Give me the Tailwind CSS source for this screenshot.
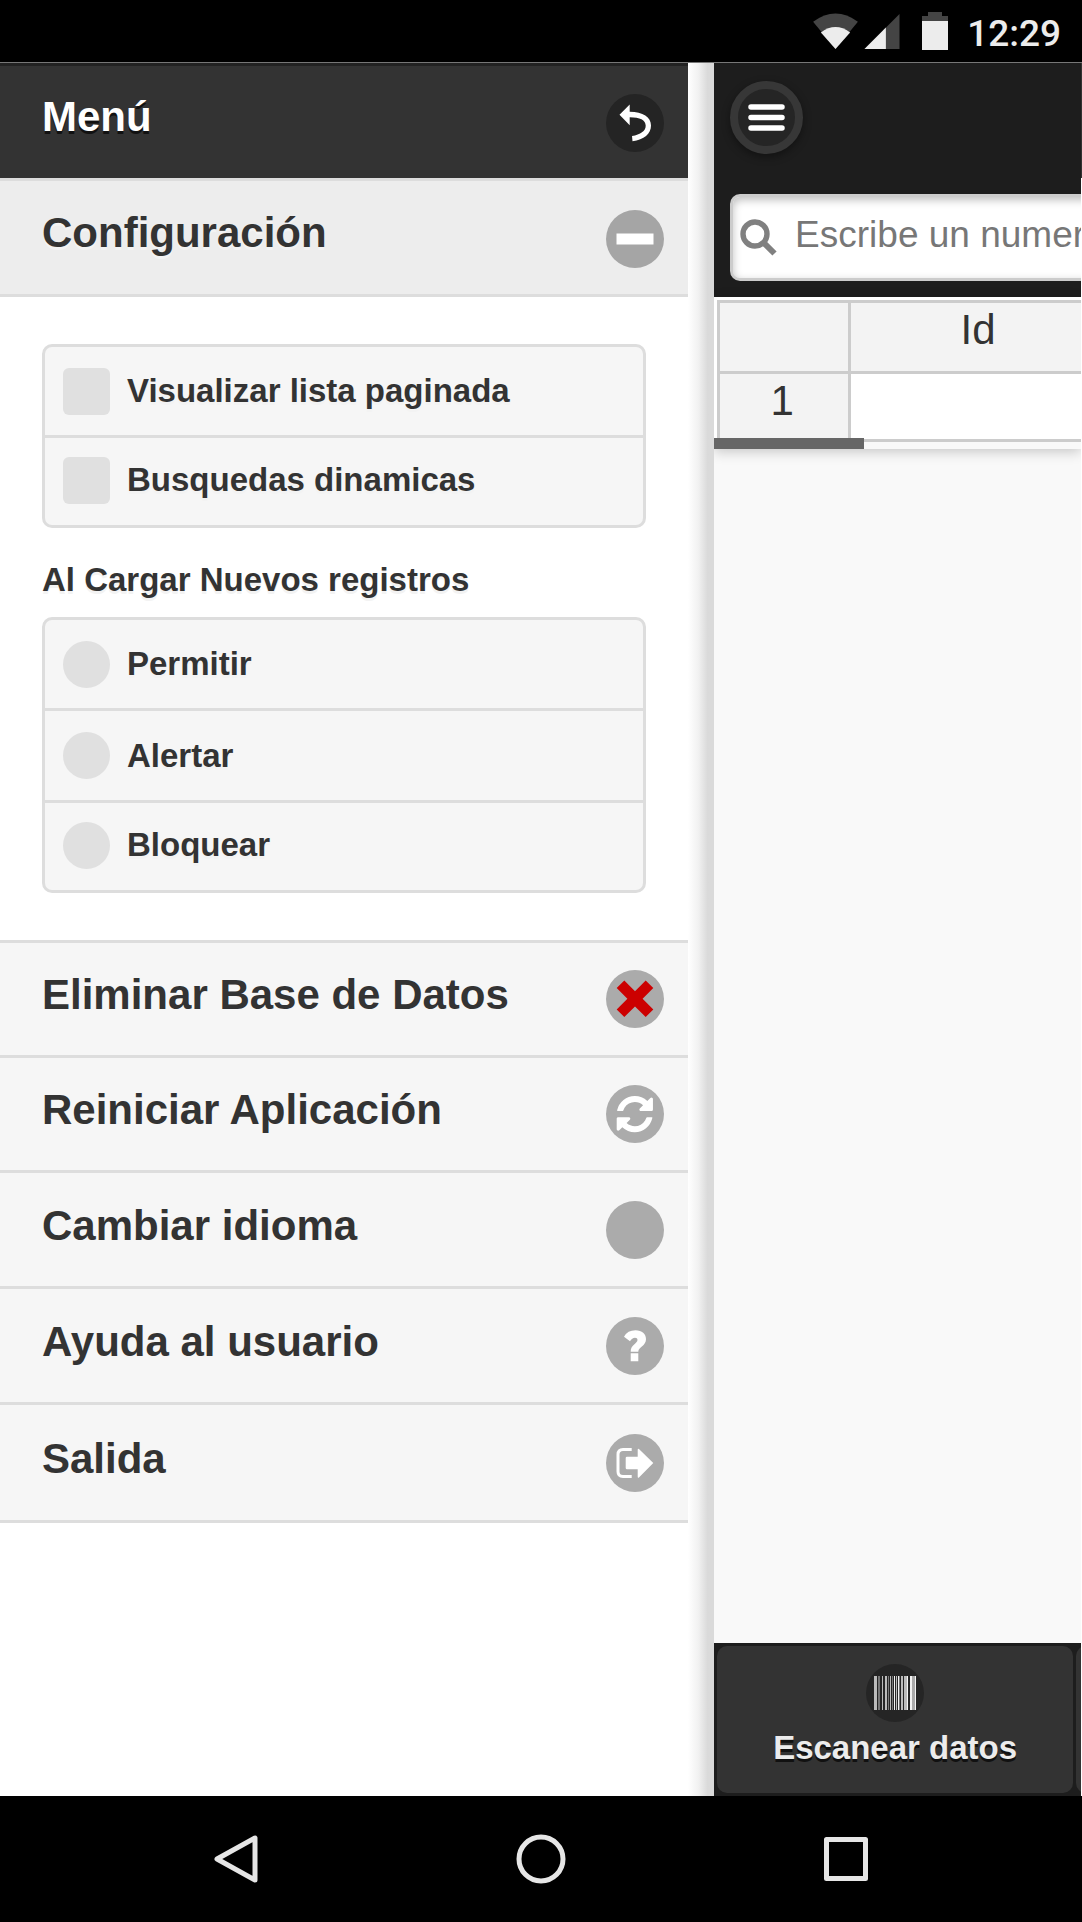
<!DOCTYPE html>
<html lang="es">
<head>
  <meta charset="UTF-8" />
  <meta name="viewport" content="width=device-width, initial-scale=1.0"/>
  <title>Menú</title>
  <script src="https://cdn.jsdelivr.net/npm/@tailwindcss/browser@4"></script>
</head>
<body class="flex min-h-screen flex-col overflow-x-hidden bg-white font-['Liberation_Sans',Arial,sans-serif] text-[#333]">

  <!-- Status bar -->
  <header class="flex h-[63px] items-center justify-end border-b border-[#777] bg-black pr-[21px]">
    <svg class="mr-[6px] h-[37px] w-[45px]" viewBox="0 0 46 38">
      <path d="M0 9Q23-8 46 9L23 37z" fill="#444"/>
      <path d="M8 20Q23 9 38 20L23 37z" fill="#ececec"/>
    </svg>
    <svg class="mr-[22px] h-[37px] w-[36px]" viewBox="0 0 36 38">
      <path d="M36 1v36H0z" fill="#444"/>
      <path d="M22 15v22H0z" fill="#ececec"/>
    </svg>
    <svg class="mr-[19px] h-[38px] w-[26px]" viewBox="0 0 26 38">
      <path d="M6 0h14v4h6v6H0V4h6z" fill="#444"/>
      <path d="M0 9h26v29H0z" fill="#ececec"/>
    </svg>
    <span class="pt-1 font-['Roboto',sans-serif] text-[37px] leading-none font-medium text-[#ececec]">12:29</span>
  </header>

  <div class="flex flex-1">

    <!-- Side panel -->
    <aside class="flex w-[66%] shrink-0">
      <nav class="flex-1 text-[42px] leading-[48px] font-bold">
        <div class="flex h-[115px] items-center justify-between border-t-3 border-[#222] bg-[#333] pt-[2px] pr-6 pl-[42px] text-white">
          <h1 class="pb-3 [text-shadow:0_3px_0_#111]">Menú</h1>
          <button type="button" aria-label="Volver">
            <svg class="size-[58px]" viewBox="0 0 58 58">
              <circle cx="29" cy="29" r="29" fill="#242424"/>
              <path d="M13.5 20.7L23.7 10.5V17.7C37 17.7 45 23 45 31.5C45 40 38 45.500 26.500 47.300L26 42C34.500 40.500 39.700 37 39.700 31.700C39.700 26 34 23.300 23.700 23.300V31.300z" fill="#fff"/>
            </svg>
          </button>
        </div>

        <button type="button" class="flex h-[119px] w-full items-center justify-between border-y-3 border-[#ddd] bg-[#ededed] pt-[2px] pr-6 pl-[42px] [text-shadow:0_3px_0_#f3f3f3]">
          <span class="pb-3">Configuración</span>
          <svg class="size-[58px]" viewBox="0 0 58 58">
            <circle cx="29" cy="29" r="29" fill="#a5a5a5"/>
            <path d="M10.500 23.500h37v11h-37z" fill="#fff"/>
          </svg>
        </button>

        <div class="px-[42px] py-[47px] text-[33px] leading-[40px] [text-shadow:0_3px_0_#f3f3f3]">
          <div class="divide-y-3 divide-[#ddd] overflow-hidden rounded-[10px] border-3 border-[#ddd] bg-[#f6f6f6]">
            <label class="flex h-[91px] items-center gap-[17px] pl-[18px]">
              <input type="checkbox" class="size-[47px] appearance-none rounded-md bg-[#e0e0e0]"> Visualizar lista paginada
            </label>
            <label class="flex h-[87px] items-center gap-[17px] pb-[3px] pl-[18px]">
              <input type="checkbox" class="size-[47px] appearance-none rounded-md bg-[#e0e0e0]"> Busquedas dinamicas
            </label>
          </div>

          <fieldset>
            <legend class="pt-8 pb-[17px]">Al Cargar Nuevos registros</legend>
            <div class="divide-y-3 divide-[#ddd] overflow-hidden rounded-[10px] border-3 border-[#ddd] bg-[#f6f6f6]">
              <label class="flex h-[91px] items-center gap-[17px] pl-[18px]">
                <input type="radio" name="registros" class="size-[47px] appearance-none rounded-full bg-[#e0e0e0]"> Permitir
              </label>
              <label class="flex h-[92px] items-center gap-[17px] pl-[18px]">
                <input type="radio" name="registros" class="size-[47px] appearance-none rounded-full bg-[#e0e0e0]"> Alertar
              </label>
              <label class="flex h-[87px] items-center gap-[17px] pb-[3px] pl-[18px]">
                <input type="radio" name="registros" class="size-[47px] appearance-none rounded-full bg-[#e0e0e0]"> Bloquear
              </label>
            </div>
          </fieldset>
        </div>

        <ul class="divide-y-3 divide-[#ddd] border-y-3 border-[#ddd] bg-[#f6f6f6] [text-shadow:0_3px_0_#f3f3f3]">
          <li>
            <button type="button" class="flex h-[112px] w-full items-center justify-between pr-6 pl-[42px]">
              <span class="pb-2">Eliminar Base de Datos</span>
              <svg class="size-[58px]" viewBox="0 0 58 58">
                <circle cx="29" cy="29" r="29" fill="#ababab"/>
                <path d="M18.300 10.500L29 21.200 39.700 10.500 47.300 18.100 36.600 28.800 47.300 39.500 39.700 47.100 29 36.400 18.300 47.100 10.700 39.500 21.400 28.800 10.700 18.100z" fill="#c00"/>
              </svg>
            </button>
          </li>
          <li>
            <button type="button" class="flex h-[112px] w-full items-center justify-between pr-6 pl-[42px]">
              <span class="pb-2">Reiniciar Aplicación</span>
              <svg class="size-[58px]" viewBox="0 0 58 58">
                <circle cx="29" cy="29" r="29" fill="#ababab"/>
                <path transform="translate(10.700 11) scale(.0236)" d="M1511 928q0 5-1 7-64 268-268 434.500T764 1536q-146 0-282.500-55T238 1324l-129 129q-19 19-45 19t-45-19-19-45V960q0-26 19-45t45-19h448q26 0 45 19t19 45-19 45l-137 137q71 66 161 102t187 36q134 0 250-65t186-179q11-17 53-117 8-23 30-23h192q13 0 22.500 9.500t9.500 22.500zm25-800v448q0 26-19 45t-45 19h-448q-26 0-45-19t-19-45 19-45l138-138Q969 256 768 256q-134 0-250 65T332 500q-11 17-53 117-8 23-30 23H50q-13 0-22.500-9.500T18 608v-7q65-268 270-434.500T768 0q146 0 284 55.500T1297 212l130-129q19-19 45-19t45 19 19 45z" fill="#fff"/>
              </svg>
            </button>
          </li>
          <li>
            <button type="button" class="flex h-[113px] w-full items-center justify-between pr-6 pl-[42px]">
              <span class="pb-2">Cambiar idioma</span>
              <svg class="size-[58px]" viewBox="0 0 58 58">
                <circle cx="29" cy="29" r="29" fill="#ababab"/>
              </svg>
            </button>
          </li>
          <li>
            <button type="button" class="flex h-[113px] w-full items-center justify-between pr-6 pl-[42px]">
              <span class="pb-2">Ayuda al usuario</span>
              <svg class="size-[58px]" viewBox="0 0 58 58">
                <circle cx="29" cy="29" r="29" fill="#ababab"/>
                <path d="M18 19.700Q21.500 13.300 29.500 13.300C36 13.300 40 17 40 22.300C40 29 32.300 30 32.300 34.700H24.700C24.300 28 31.500 26.500 31.500 23C31.500 21.500 30.500 20.700 29 20.700Q26 20.700 24 24.300zM24.700 36.300h7.600v8h-7.600z" fill="#fff"/>
              </svg>
            </button>
          </li>
          <li>
            <button type="button" class="flex h-[115px] w-full items-center justify-between pr-6 pl-[42px]">
              <span class="pb-2">Salida</span>
              <svg class="size-[58px]" viewBox="0 0 58 58">
                <circle cx="29" cy="29" r="29" fill="#ababab"/>
                <path d="M25.700 15.500H17Q12 15.500 12 20.500V37.500Q12 42.500 17 42.500H25.700" fill="none" stroke="#fff" stroke-width="3"/>
                <path d="M19.700 24Q19.700 22.700 21 22.700H31.700V16Q31.700 14 33.200 15.200L47.300 29 33.200 43.200Q31.700 44.500 31.700 42.500V35.300H21Q19.700 35.300 19.700 34z" fill="#fff"/>
              </svg>
            </button>
          </li>
        </ul>
      </nav>
      <!-- Shadow cast by the page over the panel -->
      <div class="w-[26px] bg-linear-to-r from-white via-[#f1f1f1] via-40% to-[#dadada] to-75%"></div>
    </aside>

    <!-- Page -->
    <main class="flex min-w-0 flex-1 flex-col overflow-hidden bg-[#f9f9f9]">
      <div class="h-[234px] bg-[#1d1d1d] px-4 pt-[18px]">
        <button type="button" aria-label="Abrir menú" class="flex size-[73px] items-center justify-center rounded-full border-8 border-[#373737] bg-[#252525] shadow-[0_3px_9px_rgba(0,0,0,0.4)]">
          <svg class="h-[27px] w-[37px]" viewBox="0 0 37 27">
            <path d="M3 3h31M3 13.500h31M3 24h31" stroke="#fff" stroke-width="5.500" stroke-linecap="round"/>
          </svg>
        </button>
        <label class="mt-10 flex h-[87px] w-[480px] items-center rounded-[10px] border-3 border-[#ccc] bg-white pl-[7px] shadow-[inset_0_3px_9px_rgba(0,0,0,0.25)]">
          <svg class="mr-[18px] size-[37px] shrink-0" viewBox="0 0 37 37" aria-label="Buscar">
            <circle cx="15" cy="15" r="12" fill="none" stroke="#808080" stroke-width="5.400"/>
            <path d="M23.500 23.500L34.500 34.500" stroke="#808080" stroke-width="6"/>
          </svg>
          <input type="text" placeholder="Escribe un numero" class="min-w-0 flex-1 bg-transparent pb-[6px] text-[37px] leading-[44px] outline-none placeholder:text-[#777]">
        </label>
      </div>

      <div class="bg-[#f9f9f9] shadow-[0_3px_12px_rgba(0,0,0,0.2)]">
        <div class="bg-white pt-[3px] pl-[3px]">
          <table class="w-[392px] table-fixed border-separate border-spacing-0 border-b-3 border-[#ccc] text-center text-[42px] leading-[48px]">
            <thead>
              <tr class="h-[71px]">
                <th class="w-[131px] border-t-3 border-l-3 border-[#ccc] bg-[#f3f3f3]"></th>
                <th class="border-t-3 border-l-3 border-[#ccc] bg-[#f3f3f3] pr-1 pb-[15px] font-normal">Id</th>
              </tr>
            </thead>
            <tbody>
              <tr class="h-[68px]">
                <td class="border-t-3 border-l-3 border-[#ccc] bg-[#f3f3f3] pr-1 pb-[11px]">1</td>
                <td class="border-t-3 border-l-3 border-[#ccc] bg-white"></td>
              </tr>
            </tbody>
          </table>
        </div>
        <!-- Horizontal scroll thumb, overlaps the table's bottom line -->
        <div class="relative h-[7px]">
          <div class="absolute bottom-0 left-0 h-[11px] w-[150px] bg-[#666]"></div>
        </div>
      </div>

      <footer class="mt-auto flex h-[153px] gap-[3px] bg-[#1d1d1d] py-[3px] pl-[3px]">
        <button type="button" class="flex w-[356px] shrink-0 flex-col items-center rounded-[10px] bg-[#333] pt-[18px] text-[33px] leading-[40px] font-bold text-[#ececec] [text-shadow:0_3px_0_#111]">
          <svg class="mb-[6px] size-[58px]" viewBox="0 0 58 58">
            <circle cx="29" cy="29" r="29" fill="#252525"/>
            <path d="M8 12h3v34h-3zM16 12h1v34h-1zM19 12h2v34h-2zM24 12h1v34h-1zM30 12h1v34h-1zM35 12h2v34h-2zM38 12h3v34h-3z" fill="#bbb"/>
            <path d="M12 12h2v34h-2zM22 12h1v34h-1zM26 12h1v34h-1zM33 12h1v34h-1z" fill="#777"/>
            <path d="M28 12h1v34h-1zM32 12h1v34h-1zM41 12h1v34h-1zM44 12h2v34h-2zM49 12h1v34h-1z" fill="#f3f3f3"/>
            <path d="M46 12h3v34h-3z" fill="#aaa"/>
          </svg>
          Escanear datos
        </button>
        <div class="w-[356px] shrink-0 rounded-l-[10px] bg-[#333]"></div>
      </footer>
    </main>

    <!-- Edge of the panel showing behind the page -->
    <div class="w-px bg-white">
      <div class="h-[115px] bg-[#333]"></div>
    </div>
  </div>

  <!-- System navigation -->
  <footer class="grid h-[126px] grid-cols-3 place-items-center bg-black px-[83px]">
    <button type="button" aria-label="Atrás">
      <svg class="size-[50px]" viewBox="0 0 50 50" fill="none" stroke="#e6e6e6" stroke-width="5" stroke-linejoin="round">
        <path d="M44 4V46L6 25z"/>
      </svg>
    </button>
    <button type="button" aria-label="Inicio">
      <svg class="size-[50px]" viewBox="0 0 50 50" fill="none" stroke="#e6e6e6" stroke-width="5">
        <circle cx="25" cy="25" r="22"/>
      </svg>
    </button>
    <button type="button" aria-label="Recientes">
      <svg class="size-[50px]" viewBox="0 0 50 50" fill="none" stroke="#e6e6e6" stroke-width="5" stroke-linejoin="round">
        <path d="M5.500 5.500h39v39h-39z"/>
      </svg>
    </button>
  </footer>
</body>
</html>
